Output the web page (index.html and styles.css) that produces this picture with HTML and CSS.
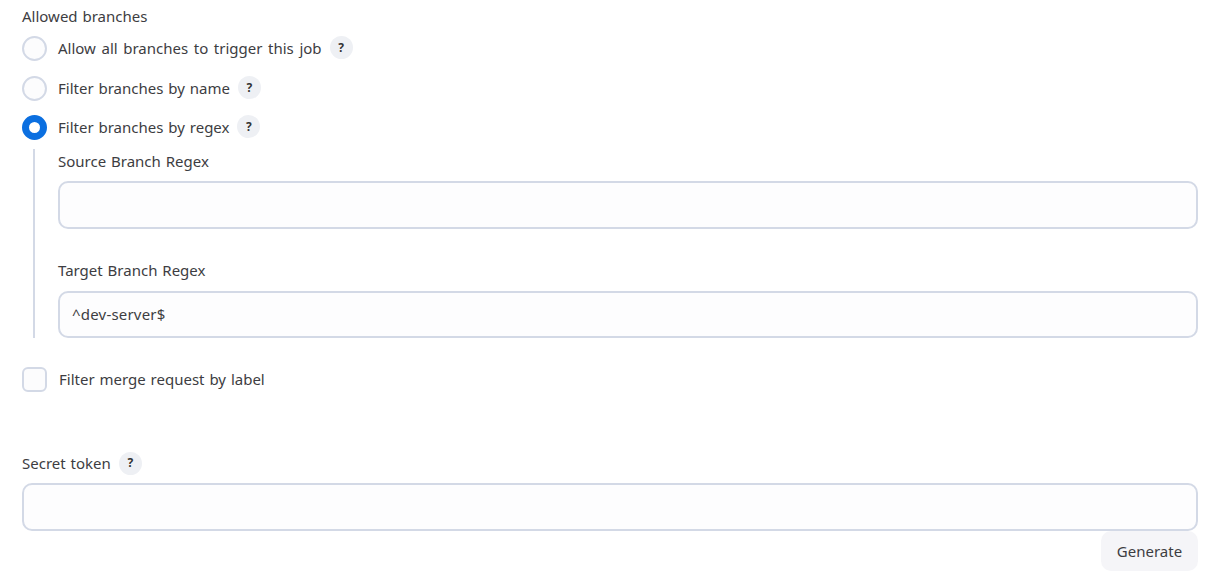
FILE: index.html
```html
<!DOCTYPE html>
<html lang="en">
<head>
    <meta charset="UTF-8">
    <title>Allowed branches</title>
    <link rel="stylesheet" href="styles.css">
</head>
<body>
    <div class="form">
        <div class="field-label title">Allowed branches</div>
        <div class="radio-row first">
            <span class="radio"></span>
            <span class="radio-label wide">Allow all branches to trigger this job</span>
            <span class="help">?</span>
        </div>
        <div class="radio-row">
            <span class="radio"></span>
            <span class="radio-label">Filter branches by name</span>
            <span class="help">?</span>
        </div>
        <div class="radio-row third">
            <span class="radio checked"></span>
            <span class="radio-label">Filter branches by regex</span>
            <span class="help">?</span>
        </div>
        <div class="nested">
            <div class="field-label">Source Branch Regex</div>
            <input type="text" class="text-input">
            <div class="field-label second">Target Branch Regex</div>
            <input type="text" class="text-input short" value="^dev-server$">
        </div>
        <div class="check-row">
            <span class="checkbox"></span>
            <span class="check-label">Filter merge request by label</span>
        </div>
        <div class="field-label token">Secret token<span class="help">?</span></div>
        <input type="text" class="text-input">
        <div class="actions">
            <button type="button" class="btn">Generate</button>
        </div>
    </div>
</body>
</html>
```

FILE: styles.css
```css
* {
    box-sizing: border-box;
}
body {
    margin: 0;
    background: #fff;
    color: #3d3d42;
    font-family: "Noto Sans", Arial, sans-serif;
    font-size: 15px;
    line-height: 20px;
    word-spacing: 1px;
}
.form {
    width: 1198px;
    padding: 6px 0 0 22px;
}
.field-label {
    display: flex;
    align-items: center;
    height: 20px;
}
.radio-row {
    display: flex;
    align-items: center;
    height: 25px;
    margin-top: 15px;
}
.radio-row.first {
    margin-top: 10px;
}
.radio-row.third {
    margin-top: 14px;
}
.radio {
    width: 25px;
    height: 25px;
    border-radius: 50%;
    border: 2px solid #d3d9e6;
    background: #fcfcfd;
    flex-shrink: 0;
}
.radio.checked {
    border: 7.5px solid #0b6fe0;
    background: #fff;
}
.radio-label {
    margin-left: 11px;
    margin-bottom: 2px;
}
.radio-label.wide {
    word-spacing: 1.7px;
}
.help {
    display: inline-flex;
    align-items: center;
    justify-content: center;
    width: 23px;
    height: 23px;
    margin-left: 8px;
    border-radius: 50%;
    background: #eef0f4;
    color: #333;
    font-size: 12px;
    font-weight: 700;
}
.radio-row .help {
    margin-bottom: 2px;
}
.nested {
    margin: 9px 0 0 11px;
    padding: 2px 0 0 23px;
    border-left: 2px solid #d3d9e6;
    height: 189px;
}
.text-input {
    display: block;
    width: 100%;
    height: 48px;
    margin-top: 10px;
    padding: 0 12px 2px;
    border: 2px solid #d3d9e6;
    border-radius: 10px;
    background: #fdfdfe;
    color: #3d3d42;
    font: inherit;
    letter-spacing: 0.2px;
}
.text-input.short {
    height: 47px;
    margin-top: 11px;
}
.field-label.second {
    margin-top: 31px;
}
.check-row {
    display: flex;
    align-items: center;
    height: 25px;
    margin-top: 29px;
}
.checkbox {
    width: 25px;
    height: 25px;
    border: 2px solid #d3d9e6;
    border-radius: 6px;
    background: #fcfcfd;
}
.check-label {
    margin-left: 12px;
    margin-bottom: 2px;
}
.field-label.token {
    margin-top: 61px;
}
.actions {
    display: flex;
    justify-content: flex-end;
}
.btn {
    width: 97px;
    height: 40px;
    border: none;
    border-radius: 10px;
    background: #f5f5f8;
    color: #3d3d42;
    font: inherit;
}
```
